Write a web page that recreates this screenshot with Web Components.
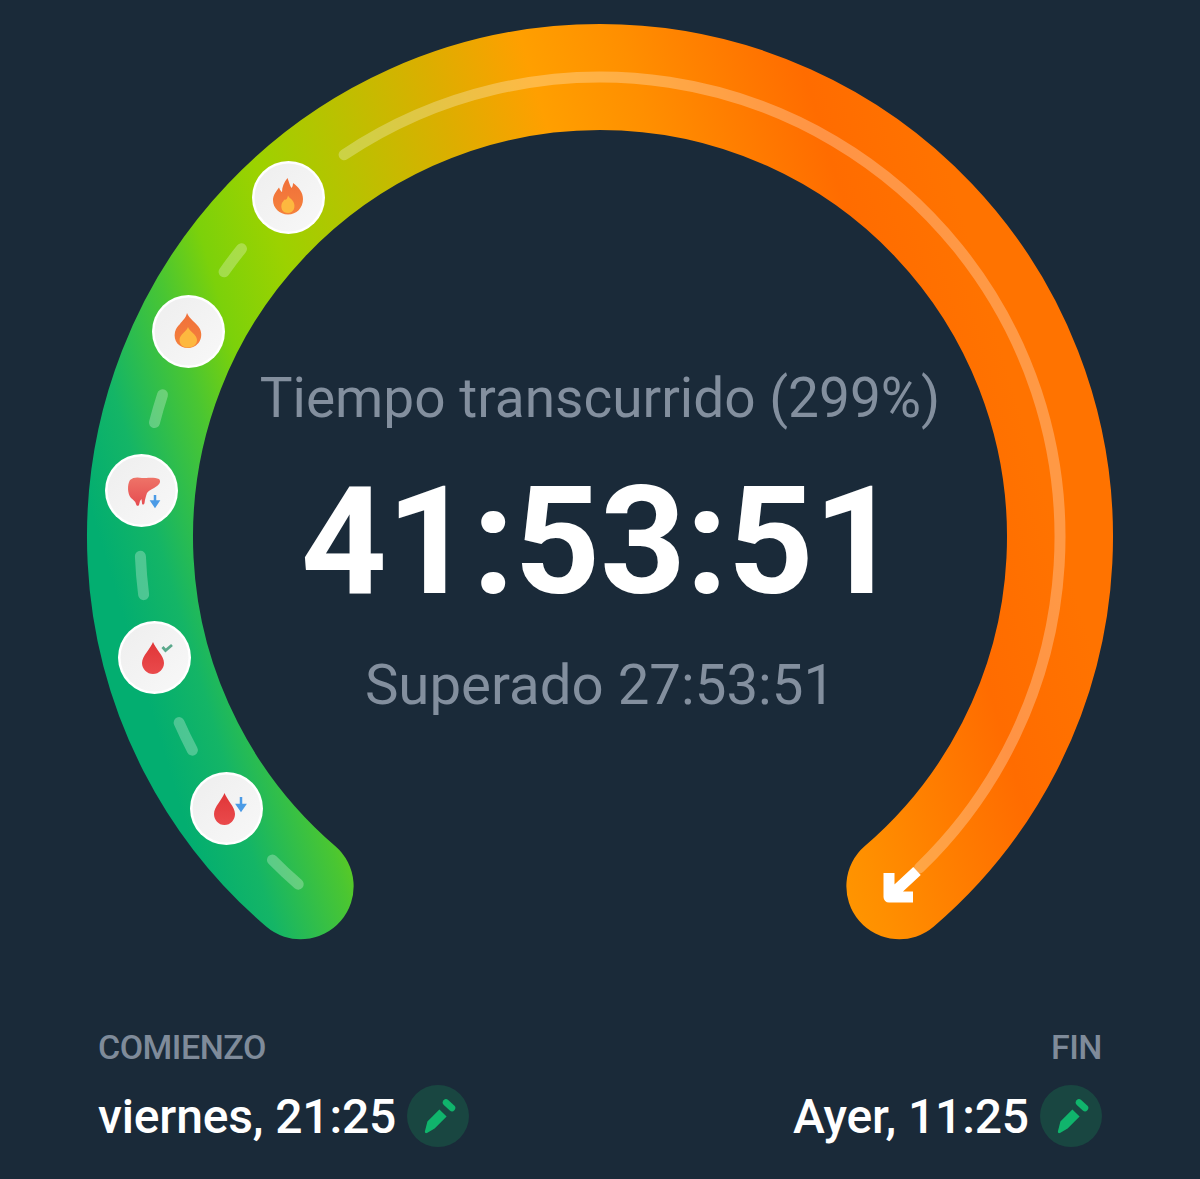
<!DOCTYPE html>
<html lang="es">
<head>
<meta charset="utf-8">
<title>Ayuno</title>
<style>
  html, body { margin: 0; background: #1a2a39; }
  body { font-family: Roboto, "Liberation Sans", sans-serif; width: 1200px; height: 1179px; overflow: hidden; }
</style>
</head>
<body>
<fast-screen>
  <fast-dial>
    <stage-marker x="288" y="197" icon="flame-tall"></stage-marker>
    <stage-marker x="188" y="331" icon="flame"></stage-marker>
    <stage-marker x="141" y="490" icon="liver"></stage-marker>
    <stage-marker x="154" y="657" icon="drop-check"></stage-marker>
    <stage-marker x="226" y="808" icon="drop-down"></stage-marker>
    <span slot="label">Tiempo transcurrido (299%)</span>
    <span slot="time">41:53:51</span>
    <span slot="extra">Superado 27:53:51</span>
  </fast-dial>
  <time-field label="COMIENZO" value="viernes, 21:25"></time-field>
  <time-field label="FIN" value="Ayer, 11:25" align="end"></time-field>
</fast-screen>

<script>
// dial geometry, all in page px
const CX = 600, CY = 537, R = 460;

function polar(deg) {
    const a = deg * Math.PI / 180;
    return [CX + R * Math.sin(a), CY - R * Math.cos(a)].map(n => n.toFixed(2)).join(' ');
}

function arc(from, to) {
    const large = Math.abs(to - from) > 180 ? 1 : 0;
    return `M${polar(from)} A${R} ${R} 0 ${large} 1 ${polar(to)}`;
}

class FastScreen extends HTMLElement {
    constructor() {
        super();
        this.attachShadow({ mode: 'open' }).innerHTML = `
        <style>
        :host{ display:grid; grid-template-columns:1fr 1fr; width:1200px; padding:0 98px; box-sizing:border-box; }
        ::slotted(fast-dial){ grid-column:1 / -1; margin:0 -98px; }
        </style>
        <slot></slot>`;
    }
}
customElements.define('fast-screen', FastScreen);

class FastDial extends HTMLElement {
    constructor() {
        super();
        const dashes = [[-139, -134.6], [-117.6, -113.8], [-97.2, -92.4], [-75.6, -72], [-54.8, -51.2]]
            .map(d => `<path class="dash" d="${arc(d[0], d[1])}"/>`).join('');
        this.attachShadow({ mode: 'open' }).innerHTML = `
        <style>
        :host{ display:grid; position:relative; height:1027px; }
        svg{ grid-area:1 / 1; display:block; }
        .dash{ fill:none; stroke:#fff; stroke-opacity:.27; stroke-width:11; stroke-linecap:round; }
        .center{ grid-area:1 / 1; position:relative; display:flex; flex-direction:column; align-items:center; padding-top:362px; color:#838f9e; }
        .label, .extra{ line-height:72px; }
        .label{ font-size:55px; }
        .extra{ font-size:56.4px; margin-top:22px; }
        .time{ font-size:150px; line-height:170px; font-weight:700; color:#fff; margin:23px 0 0; letter-spacing:-.3px; }
        </style>
        <svg width="1200" height="1027" viewBox="0 0 1200 1027">
          <defs>
            <linearGradient id="band" gradientUnits="userSpaceOnUse" x1="100" y1="540" x2="980.7" y2="275.8">
              <stop offset="0" stop-color="#03ae70"/>
              <stop offset=".06" stop-color="#14b566"/>
              <stop offset=".145" stop-color="#4ac632"/>
              <stop offset=".2" stop-color="#7cd10a"/>
              <stop offset=".28" stop-color="#9cd200"/>
              <stop offset=".49" stop-color="#dcae00"/>
              <stop offset=".595" stop-color="#ff9f00"/>
              <stop offset=".7" stop-color="#ff8f00"/>
              <stop offset=".88" stop-color="#ff6c00"/>
              <stop offset="1" stop-color="#ff7300"/>
            </linearGradient>
          </defs>
          <path d="${arc(-139.4, 139.4)}" fill="none" stroke="url(#band)" stroke-width="106" stroke-linecap="round"/>
          ${dashes}
          <path class="dash" d="${arc(-33.8, 136)}"/>
          <path d="M889 873V897H913M889 897L917 871" fill="none" stroke="#fff" stroke-width="11" stroke-linejoin="round"/>
        </svg>
        <div class="center">
          <div class="label"><slot name="label"></slot></div>
          <div class="time"><slot name="time"></slot></div>
          <div class="extra"><slot name="extra"></slot></div>
        </div>
        <slot></slot>`;
    }
}
customElements.define('fast-dial', FastDial);

const STAGE_ICONS = {
    'flame-tall': `
        <path d="M35.5 17C37 21 38 25 39.5 27C40.5 26 41 24 41 22C46.500 26 51 31 51 38C51 47 44.500 53.500 36 53.500C27.500 53.500 21 47 21 39C21 34 24.500 30 27 26.500C28 29 29 30.5 30 31C30 26 32 21 35.5 17Z" fill="url(#fire)"/>
        <path d="M36 34.500C37 37 40 38 41.500 41C44 46 41.500 52 36 52C30.500 52 28 47 30 42C30.500 41 31.500 40 32.500 38.500C33.500 39.500 35.500 38 36 34.500Z" fill="#fdb83f"/>`,
    'flame': `
        <path d="M35 18C37 24 44 27 48 34C52 43 46 53 36 53C27 53 21 46 23 37C24 33 26 31 28 29C30 26 34 23 35 18Z" fill="url(#fire)"/>
        <path d="M36 32C37 36 45 39.500 45 45C45 50 40.500 52.500 36 52.500C31.500 52.500 27.500 50 27.500 45C27.500 39.500 35 36 36 32Z" fill="#fdb83f"/>`,
    'liver': `
        <path d="M25 26C28 23 33 23 37 24C42 24 50 23 54 25C56 27 55 30 52 32C48 35 44 36 42 39C41 42 40 45 39.500 49C39 51 37 51 37 49L36.500 45L35 47L34 51C33 52.500 31.500 52 31 50C30.500 47 28 46 26 44C22.500 40 22 31 25 26Z" fill="url(#liver)"/>
        <path d="M50 41V50M47 47.500L50 52L53 47.500Z" fill="#4b9be6" stroke="#4b9be6" stroke-width="2.500"/>`,
    'drop-check': `
        <path d="M35 21C37 27 46 35 46 42C46 48 41 53 35 53C29 53 24 48 24 42C24 35 33 27 35 21Z" fill="url(#blood)"/>
        <path d="M44.500 26L47.500 29.500L54 24" fill="none" stroke="#5ba98c" stroke-width="2.800"/>`,
    'drop-down': `
        <path d="M34.500 21C36.500 27 45 35 45 42C45 48 40.500 53 34.500 53C28.500 53 24 48 24 42C24 35 32.500 27 34.500 21Z" fill="url(#blood)"/>
        <path d="M51 25V33M47.500 33L51 38L54.500 33Z" fill="#4b9be6" stroke="#4b9be6" stroke-width="2.500"/>`
};

class StageMarker extends HTMLElement {
    constructor() {
        super();
        this.attachShadow({ mode: 'open' });
    }

    connectedCallback() {
        this.style.left = (this.getAttribute('x') - 36.5) + 'px';
        this.style.top = (this.getAttribute('y') - 36.5) + 'px';
        this.shadowRoot.innerHTML = `
        <style>
        :host{ position:absolute; display:block; width:73px; height:73px; }
        svg{ display:block; }
        </style>
        <svg width="73" height="73" viewBox="0 0 73 73">
          <defs>
            <linearGradient id="fire" x1="0" y1="0" x2="0" y2="1">
              <stop offset="0" stop-color="#f0703a"/>
              <stop offset="1" stop-color="#f5813c"/>
            </linearGradient>
            <linearGradient id="blood" x1="0" y1="0" x2="0" y2="1">
              <stop offset="0" stop-color="#e03638"/>
              <stop offset="1" stop-color="#ea4a4c"/>
            </linearGradient>
            <linearGradient id="liver" x1="0" y1="0" x2="0" y2="1">
              <stop offset="0" stop-color="#ee7468"/>
              <stop offset="1" stop-color="#e64c50"/>
            </linearGradient>
            <linearGradient id="plate" x1="0" y1="0" x2="1" y2="1">
              <stop offset="0" stop-color="#eeeeee"/>
              <stop offset="1" stop-color="#f8f8f8"/>
            </linearGradient>
          </defs>
          <circle cx="36.5" cy="36.5" r="36.5" fill="#fff"/>
          <circle cx="36.5" cy="36.5" r="34" fill="url(#plate)"/>
          ${STAGE_ICONS[this.getAttribute('icon')] || ''}
        </svg>`;
    }
}
customElements.define('stage-marker', StageMarker);

class EditButton extends HTMLElement {
    constructor() {
        super();
        this.attachShadow({ mode: 'open' }).innerHTML = `
        <style>
        :host{ display:block; width:62px; height:62px; border-radius:50%; background:#194641; flex:none; }
        svg{ display:block; }
        </style>
        <svg width="62" height="62" viewBox="0 0 62 62">
          <path d="M32.400 24.500L39.600 31.500L27.600 43.500L20 48C18.500 48.500 17.500 47.500 18 46L20.400 36.500Z" fill="#10b46c"/>
          <path d="M39 17.500L45 23" fill="none" stroke="#10b46c" stroke-width="6.500" stroke-linecap="round"/>
        </svg>`;
    }
}
customElements.define('edit-button', EditButton);

class TimeField extends HTMLElement {
    constructor() {
        super();
        this.attachShadow({ mode: 'open' });
    }

    connectedCallback() {
        this.shadowRoot.innerHTML = `
        <style>
        :host{ display:flex; flex-direction:column; align-items:flex-start; }
        :host([align="end"]){ align-items:flex-end; }
        .label{ font-size:34px; line-height:40px; font-weight:500; color:#7f8b9a; letter-spacing:-.5px; }
        .row{ display:flex; align-items:center; gap:11px; margin-top:18px; }
        .value{ font-size:48px; line-height:62px; font-weight:500; color:#fff; letter-spacing:-.15px; position:relative; top:1px; }
        </style>
        <div class="label">${this.getAttribute('label')}</div>
        <div class="row">
          <span class="value">${this.getAttribute('value')}</span>
          <edit-button></edit-button>
        </div>`;
    }
}
customElements.define('time-field', TimeField);
</script>
</body>
</html>
